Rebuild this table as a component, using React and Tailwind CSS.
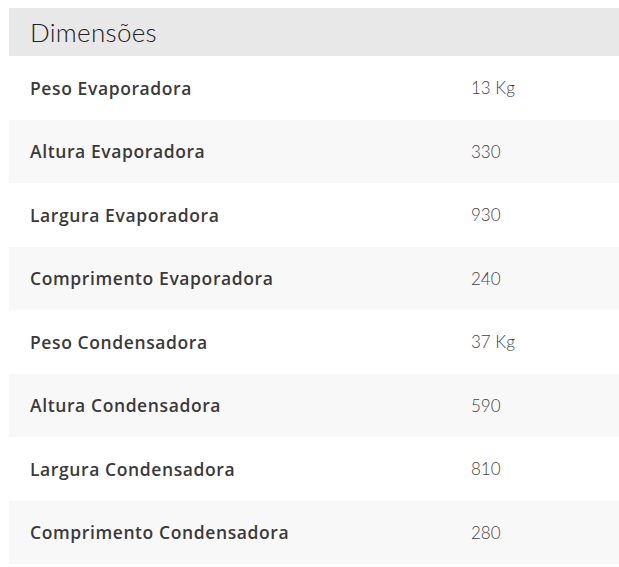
export default function App() {
  const rows = [
    ["Peso Evaporadora", "13 Kg"],
    ["Altura Evaporadora", "330"],
    ["Largura Evaporadora", "930"],
    ["Comprimento Evaporadora", "240"],
    ["Peso Condensadora", "37 Kg"],
    ["Altura Condensadora", "590"],
    ["Largura Condensadora", "810"],
    ["Comprimento Condensadora", "280"],
  ];
  return (
    <div className="w-[619px] h-[567px] bg-white pt-2 pl-[9px]" style={{ fontFamily: "Lato, 'Noto Sans', sans-serif" }}>
      <div className="h-12 bg-[#e8e8e8] flex items-center pl-[21px]">
        <h2 className="text-[26px] font-light text-[#222] leading-none tracking-[0.3px]">Dimensões</h2>
      </div>
      <div className="flex flex-col">
        {rows.map(([k, v], i) => (
          <div key={k} className={`h-[63.5px] flex items-center ${i % 2 ? "bg-[#f8f8f8]" : "bg-white"}`}>
            <div className="w-[462px] pl-[21px] text-[17.5px] font-semibold text-[#3a3a3a] tracking-[0.6px]" style={{ fontFamily: "'Open Sans', sans-serif" }}>{k}</div>
            <div className="text-[17px] font-light text-[#444]">{v}</div>
          </div>
        ))}
      </div>
    </div>
  );
}
